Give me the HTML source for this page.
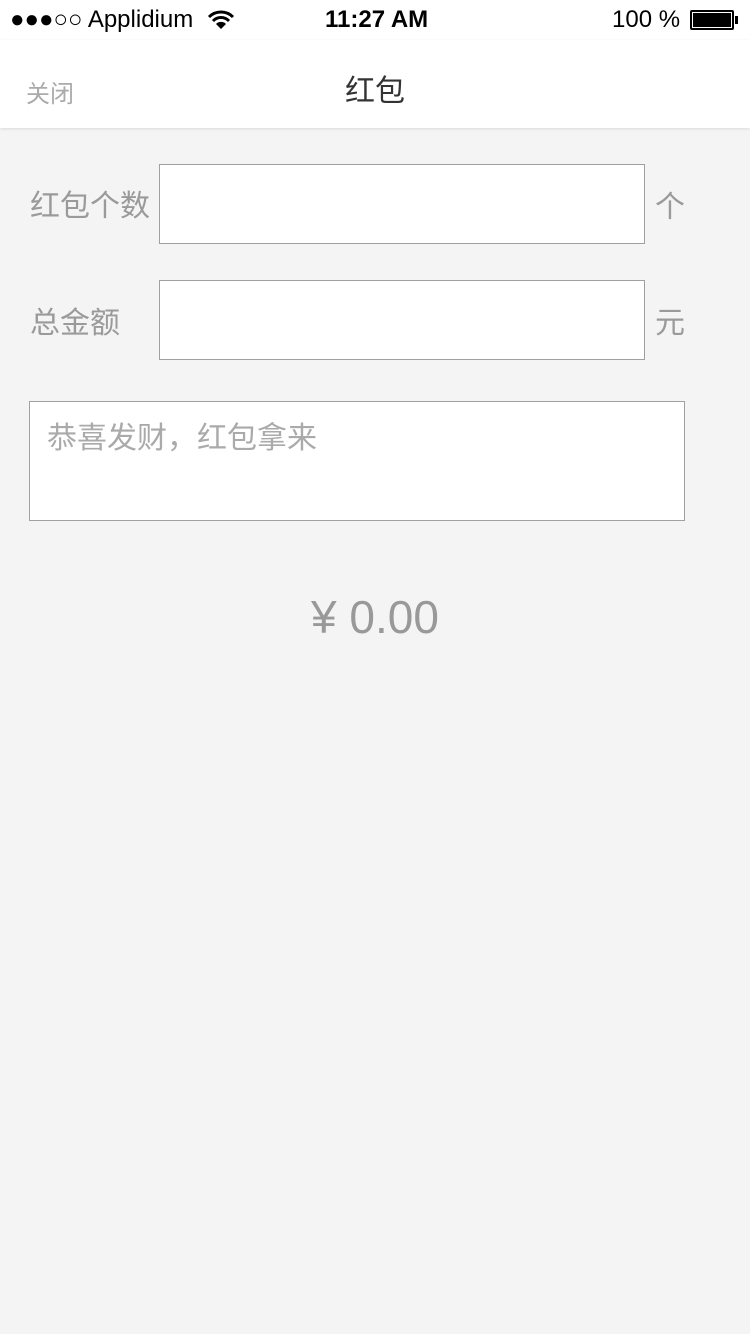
<!DOCTYPE html>
<html><head><meta charset="utf-8"><style>
body{margin:0;width:750px;height:1334px;background:#f4f4f4;font-family:"Liberation Sans","Noto Sans CJK SC",sans-serif;position:relative;overflow:hidden}
.a{position:absolute}
.status{top:0;left:0;width:750px;height:40px;background:#fff}
.nav{top:40px;left:0;width:750px;height:88px;background:#fff;box-shadow:0 1px 3px rgba(0,0,0,.1)}
.box{background:#fff;border:1px solid #a0a0a0;box-sizing:border-box}
.lbl{color:#9a9a9a;font-size:30px}
</style></head><body>
<div class="a status"></div>
<div class="a" style="left:10px;top:6px;font-size:24px;color:#000">●●●○○ Applidium</div>
<svg class="a" style="left:207px;top:10px" width="28" height="20" viewBox="0 0 28 20"><path d="M2 7 A17 17 0 0 1 26 7" stroke="#000" stroke-width="3" fill="none"/><path d="M6 11 A11 11 0 0 1 22 11" stroke="#000" stroke-width="3" fill="none"/><path d="M14 19 L9 14 A7 7 0 0 1 19 14 Z" fill="#000"/></svg>
<div class="a" style="left:325px;top:6px;font-size:24px;font-weight:bold;color:#000">11:27 AM</div>
<div class="a" style="left:612px;top:6px;font-size:24px;color:#000">100 %</div>
<div class="a" style="left:690px;top:10px;width:44px;height:20px;border:2px solid #000;box-sizing:border-box;border-radius:2px;padding:1px"><div style="background:#000;width:100%;height:100%"></div></div>
<div class="a" style="left:735px;top:16px;width:3px;height:8px;background:#000"></div>
<div class="a nav"></div>
<div class="a" style="left:26px;top:74px;font-size:24px;color:#aaa">关闭</div>
<div class="a" style="left:345px;top:66px;font-size:30px;color:#333">红包</div>
<div class="a lbl" style="left:30px;top:181px">红包个数</div>
<div class="a box" style="left:159px;top:164px;width:486px;height:80px"></div>
<div class="a lbl" style="left:655px;top:182px">个</div>
<div class="a lbl" style="left:30px;top:298px">总金额</div>
<div class="a box" style="left:159px;top:280px;width:486px;height:80px"></div>
<div class="a lbl" style="left:655px;top:298px">元</div>
<div class="a box" style="left:29px;top:401px;width:656px;height:120px"></div>
<div class="a lbl" style="left:47px;top:413px;color:#aaa;font-size:30px">恭喜发财，红包拿来</div>
<div class="a" style="left:0;width:750px;top:590px;text-align:center;font-size:46px;color:#999">¥ 0.00</div>
</body></html>
